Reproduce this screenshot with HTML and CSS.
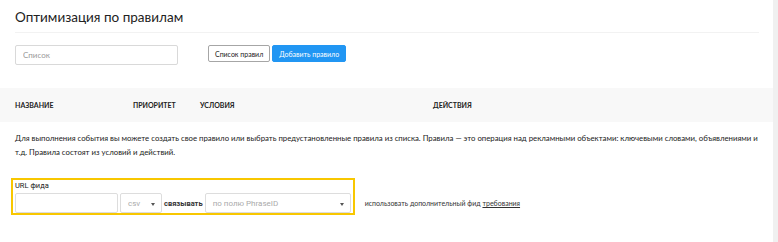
FILE: index.html
```html
<!DOCTYPE html>
<html lang="ru">
<head>
    <meta charset="UTF-8">
    <title>Оптимизация по правилам</title>
    <link rel="stylesheet" href="styles.css">
</head>
<body>

<div class="page">
    <div class="content">
        <div class="page-header">
            <h1>Оптимизация по правилам</h1>
        </div>

        <div class="toolbar">
            <input type="text" class="search" placeholder="Список">
            <div class="buttons">
                <button class="btn">Список правил</button>
                <button class="btn btn-primary">Добавить правило</button>
            </div>
        </div>

        <div class="table-head">
            <div>Название</div>
            <div>Приоритет</div>
            <div>Условия</div>
            <div>Действия</div>
        </div>

        <p class="hint">Для выполнения события вы можете создать свое правило или выбрать предустановленные правила из списка. Правила — это операция над рекламными объектами: ключевыми словами, объявлениями и т.д. Правила состоят из условий и действий.</p>

        <div class="feed-row">
            <div class="feed-box">
                <label for="feed-url">URL фида</label>
                <div class="feed-fields">
                    <input type="text" id="feed-url" class="feed-url">
                    <div class="select select-format">csv <span class="caret"></span></div>
                    <span class="link-word">связывать</span>
                    <div class="select select-field">по полю PhraseID <span class="caret"></span></div>
                </div>
            </div>
            <div class="feed-extra">использовать дополнительный фид <a href="#">требования</a></div>
        </div>
    </div>
    <div class="scroll-strip"></div>
</div>

</body>
</html>
```

FILE: styles.css
```css
body {
    font-family: Lato, 'Open Sans', sans-serif;
    margin: 0;
    color: #222;
    background: #fff;
}
.page {
    display: flex;
    min-height: 242px;
}
.content {
    flex: 1;
}
.scroll-strip {
    width: 5px;
    background: #f0f0f0;
}
.page-header {
    margin: 0 14px 0 15px;
    height: 33px;
    border-bottom: 1px solid #f2f2f2;
    box-sizing: border-box;
    padding-top: 9px;
}
h1 {
    margin: 0;
    font-size: 13.5px;
    font-weight: 400;
    line-height: 16px;
    color: #222;
}
.toolbar {
    display: flex;
    align-items: flex-start;
    margin: 12px 0 0 15px;
}
.search {
    width: 163px;
    height: 20px;
    box-sizing: border-box;
    border: 1px solid #d9d9d9;
    border-radius: 2px;
    padding: 0 7px;
    font-family: Lato, sans-serif;
    font-size: 8px;
    outline: none;
}
.search::placeholder {
    color: #999;
}
.buttons {
    display: flex;
    gap: 2px;
    margin-left: 30px;
}
.btn {
    height: 17px;
    padding: 0 6px;
    border: 1px solid #a6a6a6;
    border-radius: 2px;
    background: #fff;
    color: #222;
    font-family: Lato, sans-serif;
    font-size: 7px;
    cursor: pointer;
}
.btn-primary {
    background: #2196f3;
    border-color: #2196f3;
    color: #fff;
}
.table-head {
    display: grid;
    grid-template-columns: 118px 67px 233px 1fr;
    align-items: center;
    height: 34px;
    margin-top: 23px;
    padding-left: 15px;
    background: #f8f8f8;
    font-size: 7px;
    font-weight: 700;
    text-transform: uppercase;
    color: #222;
}
.hint {
    margin: 10px 14px 0 15px;
    font-size: 7.8px;
    line-height: 13.5px;
    color: #222;
}
.feed-row {
    display: flex;
    align-items: flex-end;
    margin: 19px 0 0 11px;
}
.feed-box {
    border: 2px solid #f8c700;
    padding: 1px 2px 0 2px;
}
.feed-box label {
    display: block;
    height: 12px;
    font-family: Roboto, 'Liberation Sans', sans-serif;
    font-size: 7.5px;
    line-height: 9px;
    color: #222;
}
.feed-fields {
    display: flex;
    align-items: center;
    gap: 2px;
}
.feed-url,
.select {
    height: 20px;
    box-sizing: border-box;
    border: 1px solid #ddd;
    border-radius: 2px;
    background: #fff;
}
.feed-url {
    width: 103px;
    outline: none;
}
.select {
    position: relative;
    display: flex;
    align-items: center;
    padding-left: 7px;
    font-family: Roboto, 'Liberation Sans', sans-serif;
    font-size: 8px;
    color: #aaa;
}
.select-format {
    width: 42px;
}
.select-field {
    width: 146px;
}
.caret {
    position: absolute;
    right: 6px;
    top: 9px;
    border-left: 2.5px solid transparent;
    border-right: 2.5px solid transparent;
    border-top: 3px solid #555;
}
.link-word {
    font-family: Roboto, 'Liberation Sans', sans-serif;
    font-size: 7.5px;
    font-weight: 700;
    color: #333;
}
.feed-extra {
    margin: 0 0 8px 10px;
    font-size: 7px;
    color: #333;
}
.feed-extra a {
    color: #333;
}
```
